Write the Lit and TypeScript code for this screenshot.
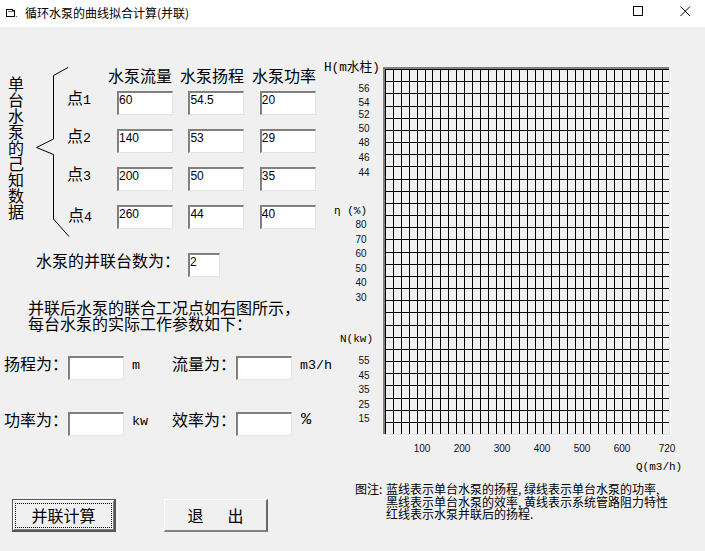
import { LitElement, html, css, svg } from "lit";
import { customElement } from "lit/decorators.js";

const rows = [
  ["1", "60", "54.5", "20"],
  ["2", "140", "53", "29"],
  ["3", "200", "50", "35"],
  ["4", "260", "44", "40"],
];
const hTicks = [[56, 88], [54, 102], [52, 114], [50, 128], [48, 142], [46, 157], [44, 172]];
const etaTicks = [[80, 224], [70, 239], [60, 253], [50, 268], [40, 282], [30, 297]];
const nTicks = [[55, 360], [45, 375], [35, 389], [25, 404], [15, 418]];
const xTicks = [[100, 422], [200, 462], [300, 502], [400, 542], [500, 582], [600, 622], [720, 667]];

@customElement("app-root")
export class AppRoot extends LitElement {
  static styles = css`
    :host {
      display: block;
      width: 705px;
      height: 551px;
      overflow: hidden;
      background: #f0f0f0;
      color: #000;
      font-family: "Noto Sans CJK SC", sans-serif;
      font-size: 16px;
      line-height: 16px;
    }
    .titlebar {
      height: 27px;
      background: #fff;
      display: flex;
      align-items: center;
      padding-left: 6px;
      font-size: 12px;
      box-sizing: border-box;
    }
    .app-icon { width: 11px; height: 10px; margin-right: 8px; margin-bottom: 2px; flex: none; }
    .title { flex: 1; padding-bottom: 2px; }
    .win { width: 11px; height: 11px; margin-bottom: 4px; flex: none; }
    .win.max { margin-right: 36px; }
    .win.close { margin-right: 14px; }
    .main { display: grid; grid-template-columns: 320px 385px; }
    .left { white-space: nowrap; min-width: 0; }
    .data { display: flex; margin-top: 40px; height: 170px; }
    .vtext { width: 16px; margin: 8px 0 0 8px; white-space: normal; flex: none; }
    .brace { width: 34px; height: 170px; margin-left: 12px; flex: none; }
    .table { margin-left: -2px; flex: none; }
    .heads { display: flex; gap: 8px; margin-left: 40px; height: 24px; box-sizing: border-box; }
    .row { display: flex; height: 24px; margin-bottom: 14px; align-items: flex-start; }
    .row.last { margin-top: 1px; }
    .pt { width: 50px; margin: -2px 0 0 -1px; flex: none; }
    .row.last .pt { padding-left: 1px; width: 49px; margin-top: 1px; }
    .cells { display: flex; gap: 15.4px; }
    .mono { font-family: "Liberation Mono", monospace; font-size: 13.33px; }
    .field {
      box-sizing: border-box;
      width: 56px;
      height: 24px;
      padding: 0 0 7px 0;
      margin: 0;
      background: #fff;
      border-style: solid;
      border-width: 2px 1px 1px 2px;
      border-color: #808080 #e3e3e3 #e3e3e3 #808080;
      font-family: "Liberation Sans", sans-serif;
      font-size: 12px;
      color: #000;
      outline: none;
      border-radius: 0;
      display: block;
      flex: none;
    }
    .field.small { width: 32px; }
    .count { display: flex; margin: 16px 0 0 36px; height: 24px; }
    .count span { width: 152px; margin-top: -1px; flex: none; }
    .para { margin: 22px 0 0 28px; }
    .res { display: flex; height: 24px; }
    .res.first { margin-top: 25px; }
    .res.second { margin-top: 32px; }
    .res .lab { width: 64px; margin: -1px 0 0 4px; flex: none; }
    .res .lab.b { margin-left: 0; }
    .res .unit { width: 40px; margin-left: 8px; padding-top: 2px; flex: none; }
    .res .unit.pct { font-size: 17px; padding-top: 0; margin-left: 9px; width: 39px; }
    .buttons { display: flex; gap: 48px; margin: 63px 0 0 12px; }
    .btn {
      box-sizing: border-box;
      width: 104px;
      height: 33px;
      padding: 0;
      background: #f0f0f0;
      font: inherit;
      color: #000;
      border-style: solid;
      border-width: 1px 2px 2px 1px;
      border-color: #fff #696969 #808080 #fff;
      border-radius: 0;
      display: flex;
      align-items: center;
      justify-content: center;
      gap: 24px;
    }
    .btn.primary {
      border: 1px solid #555;
      border-right-width: 2px;
      border-bottom-width: 2px;
      box-shadow: inset 1px 1px 0 #fff, inset -1px -1px 0 #808080;
    }
    .focus {
      box-sizing: border-box;
      width: 97px;
      height: 25px;
      border: 1px dotted #000;
      display: flex;
      align-items: center;
      justify-content: center;
    }
    .right { min-width: 0; }
    .chart { display: block; width: 385px; height: 421px; margin-top: 30px; }
    .chart text { font-family: "Liberation Sans", sans-serif; font-size: 10px; fill: #111; }
    .chart text.ax { font-family: "Liberation Mono", "Noto Sans CJK SC", monospace; font-size: 11px; fill: #000; }
    .chart text.head { font-family: "Liberation Mono", "Noto Sans CJK SC", monospace; font-size: 12.7px; fill: #000; }
    .legend { display: flex; font-size: 12px; line-height: 12.5px; margin: 5px 0 0 35px; white-space: nowrap; }
    .legend .key { width: 31px; flex: none; }
    .comma { display: inline-block; width: 6px; }
  `;

  private grid() {
    const out = [];
    for (let i = 0; i < 30; i++) {
      const y = Math.round(69 + i * 12.17);
      out.push(svg`<rect x="385" y=${y} width="284" height="1" fill="#000"></rect>`);
    }
    for (let i = 0; i < 36; i++) {
      const x = Math.round(385 + i * 7.9);
      out.push(svg`<rect x=${x} y="69" width="1" height="365" fill="#000"></rect>`);
    }
    return out;
  }

  private ticks(list: number[][], x: number) {
    return list.map(
      ([v, y]) => svg`<text x=${x} y=${y + 3.5} text-anchor="middle">${v}</text>`
    );
  }

  render() {
    return html`
      <div class="titlebar">
        <svg class="app-icon" viewBox="0 0 11 10" shape-rendering="crispEdges">
          <path d="M0.5 8.5V1.5H6.5V2.5H8.5V8.5H0.5" fill="none" stroke="#000"></path>
          <rect x="2" y="3" width="6" height="1" fill="#19a0b0"></rect>
          <rect x="10" y="8" width="1" height="1" fill="#555"></rect>
        </svg>
        <div class="title">循环水泵的曲线拟合计算(并联)</div>
        <svg class="win max" viewBox="0 0 11 11" shape-rendering="crispEdges">
          <rect x="0.5" y="0.5" width="9" height="9" fill="none" stroke="#000"></rect>
        </svg>
        <svg class="win close" viewBox="0 0 11 11">
          <path d="M0.5 0.5L10 10M10 0.5L0.5 10" fill="none" stroke="#000" stroke-width="1"></path>
        </svg>
      </div>
      <div class="main">
        <div class="left">
          <div class="data">
            <div class="vtext">单台水泵的己知数据</div>
            <svg class="brace" viewBox="36 67 34 170">
              <path d="M68 67.5L53.5 75.5V139L36.5 147.5L53.5 154.5V219L69 236.5" fill="none" stroke="#000" stroke-width="1"></path>
            </svg>
            <div class="table">
              <div class="heads">
                <span>水泵流量</span><span>水泵扬程</span><span>水泵功率</span>
              </div>
              ${rows.map(
                (r, i) => html`
                  <div class="row ${i === 3 ? "last" : ""}">
                    <div class="pt">点<span class="mono">${r[0]}</span></div>
                    <div class="cells">
                      <input class="field" .value=${r[1]} />
                      <input class="field" .value=${r[2]} />
                      <input class="field" .value=${r[3]} />
                    </div>
                  </div>
                `
              )}
            </div>
          </div>
          <div class="count">
            <span>水泵的并联台数为：</span>
            <input class="field small" .value=${"2"} />
          </div>
          <div class="para">并联后水泵的联合工况点如右图所示，<br />每台水泵的实际工作参数如下：</div>
          <div class="res first">
            <div class="lab">扬程为：</div>
            <input class="field" />
            <div class="unit mono">m</div>
            <div class="lab b">流量为：</div>
            <input class="field" />
            <div class="unit mono">m3/h</div>
          </div>
          <div class="res second">
            <div class="lab">功率为：</div>
            <input class="field" />
            <div class="unit mono">kw</div>
            <div class="lab b">效率为：</div>
            <input class="field" />
            <div class="unit mono pct">%</div>
          </div>
          <div class="buttons">
            <button class="btn primary"><span class="focus">并联计算</span></button>
            <button class="btn"><span>退</span><span>出</span></button>
          </div>
        </div>
        <div class="right">
          <svg class="chart" viewBox="320 57 385 421">
            <text class="head" x="324" y="71">H(m水柱)</text>
            <text class="ax" x="334" y="214">η (%)</text>
            <text class="ax" x="340" y="342">N(kw)</text>
            <text class="ax" x="636" y="470">Q(m3/h)</text>
            ${this.ticks(hTicks, 364)}
            ${this.ticks(etaTicks, 361)}
            ${this.ticks(nTicks, 364)}
            ${xTicks.map(
              ([v, x]) => svg`<text x=${x} y="451.5" text-anchor="middle">${v}</text>`
            )}
            <rect x="383" y="67" width="288" height="369" fill="#fff"></rect>
            <rect x="383" y="67" width="287" height="368" fill="#e3e3e3"></rect>
            <rect x="383" y="67" width="286" height="367" fill="#808080"></rect>
            <rect x="385" y="69" width="284" height="365" fill="#f0f0f0"></rect>
            <g shape-rendering="crispEdges">${this.grid()}</g>
          </svg>
          <div class="legend">
            <div class="key">图注:</div>
            <div>蓝线表示单台水泵的扬程<span class="comma">,</span>绿线表示单台水泵的功率<span class="comma">,</span><br />黑线表示单台水泵的效率<span class="comma">,</span>黄线表示系统管路阻力特性<br />红线表示水泵并联后的扬程<span class="comma">.</span></div>
          </div>
        </div>
      </div>
    `;
  }
}
